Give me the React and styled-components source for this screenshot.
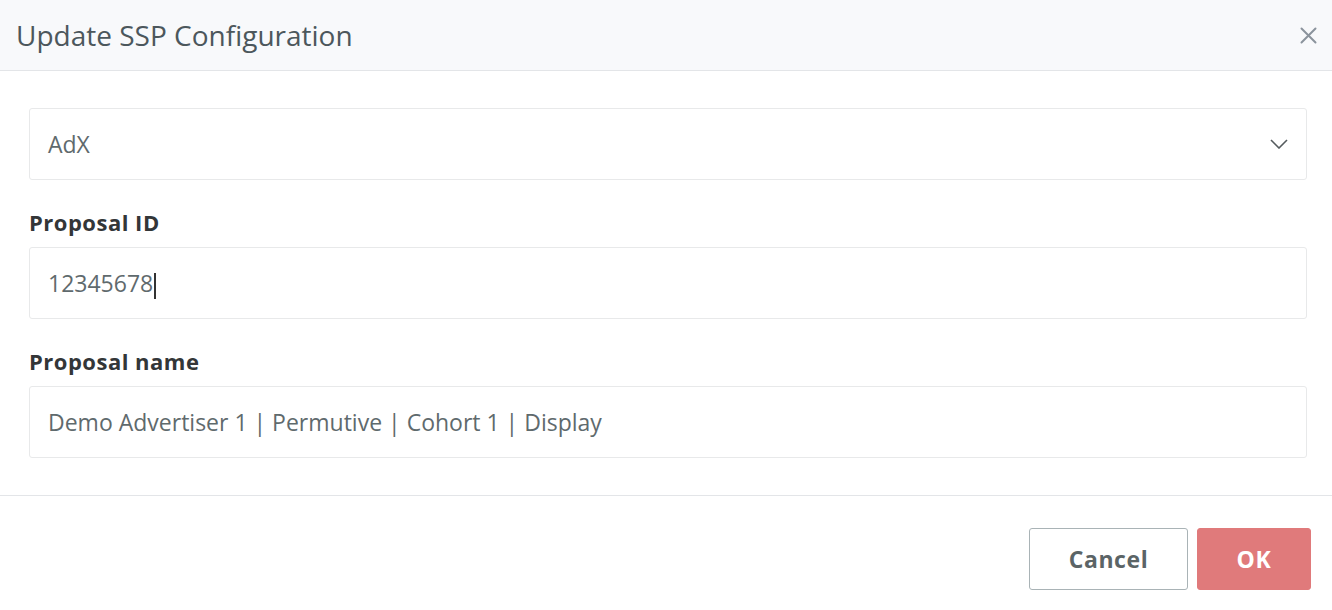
import React from 'react'
import styled, { createGlobalStyle } from 'styled-components'

const Global = createGlobalStyle`
  html, body {
    margin: 0;
    padding: 0;
    background: #fff;
  }
  body {
    font-family: "Open Sans", "Noto Sans", sans-serif;
  }
`

const Modal = styled.div`
  width: 1332px;
  height: 610px;
  background: #fff;
  display: flex;
  flex-direction: column;
`

const Header = styled.div`
  height: 71px;
  box-sizing: border-box;
  background: #f8f9fb;
  border-bottom: 1px solid #e3e5e8;
  display: flex;
  align-items: center;
  justify-content: space-between;
  padding: 0 14px 0 16px;

  h2 {
    margin: 0;
    font-size: 28px;
    font-weight: 400;
    color: #4c575c;
  }
`

const Close = styled.button`
  border: none;
  background: none;
  padding: 0;
  width: 20px;
  height: 20px;
  display: flex;
  align-items: center;
  justify-content: center;
  cursor: pointer;
`

const Body = styled.div`
  padding: 37px 25px 37px 29px;
  display: flex;
  flex-direction: column;
  border-bottom: 1px solid #e3e5e8;
`

const Field = styled.div`
  display: flex;
  flex-direction: column;
  margin-top: ${p => (p.first ? '0' : '29px')};
`

const Label = styled.label`
  font-size: 22px;
  font-weight: 700;
  letter-spacing: 0.5px;
  color: #333638;
  margin-bottom: 12px;
  line-height: 26px;
`

const Box = styled.div`
  height: 72px;
  box-sizing: border-box;
  border: 1px solid #e8e9ea;
  border-radius: 3px;
  display: flex;
  align-items: center;
  justify-content: space-between;
  padding: 0 18px 0 18px;
  font-size: 23px;
  color: #5f6a6d;
`

const Caret = styled.span`
  display: inline-block;
  width: 1.5px;
  height: 26px;
  background: #333;
  margin-left: 1px;
  vertical-align: middle;
`

const Footer = styled.div`
  display: flex;
  justify-content: flex-end;
  gap: 9px;
  padding: 32px 21px 0 0;
`

const Button = styled.button`
  height: 62px;
  box-sizing: border-box;
  border-radius: 3px;
  font-family: inherit;
  font-size: 23px;
  font-weight: 700;
  letter-spacing: 0.6px;
  padding: 0;
  width: ${p => p.w}px;
  border: 1px solid ${p => (p.primary ? '#e07a7b' : '#a9b3b6')};
  background: ${p => (p.primary ? '#e07a7b' : '#fff')};
  color: ${p => (p.primary ? '#fff' : '#5b6466')};
  cursor: pointer;
`

export default function App() {
  return (
    <Modal>
      <Global />
      <Header>
        <h2>Update SSP Configuration</h2>
        <Close aria-label="Close">
          <svg width="17" height="17" viewBox="0 0 17 17">
            <path d="M1.5 1.5 L15.5 15.5 M15.5 1.5 L1.5 15.5" stroke="#8b939c" strokeWidth="2" strokeLinecap="round" />
          </svg>
        </Close>
      </Header>
      <Body>
        <Field first>
          <Box>
            <span>AdX</span>
            <svg width="18" height="10" viewBox="0 0 18 10">
              <path d="M1 1 L9 9 L17 1" fill="none" stroke="#555b5e" strokeWidth="1.6" />
            </svg>
          </Box>
        </Field>
        <Field>
          <Label>Proposal ID</Label>
          <Box>
            <span>12345678<Caret /></span>
          </Box>
        </Field>
        <Field>
          <Label>Proposal name</Label>
          <Box>
            <span>Demo Advertiser 1 | Permutive | Cohort 1 | Display</span>
          </Box>
        </Field>
      </Body>
      <Footer>
        <Button w={159}>Cancel</Button>
        <Button primary w={114}>OK</Button>
      </Footer>
    </Modal>
  )
}
